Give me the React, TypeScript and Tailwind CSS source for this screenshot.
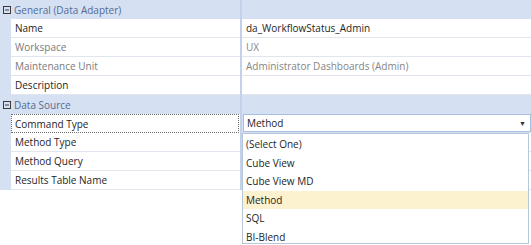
import { useState } from "react";

type Row = {
  label: string;
  value?: string;
  muted?: boolean;
};

const general: Row[] = [
  { label: "Name", value: "da_WorkflowStatus_Admin" },
  { label: "Workspace", value: "UX", muted: true },
  { label: "Maintenance Unit", value: "Administrator Dashboards (Admin)", muted: true },
  { label: "Description", value: "" },
];

const dataSource: Row[] = [
  { label: "Method Type" },
  { label: "Method Query" },
  { label: "Results Table Name" },
];

const options = ["(Select One)", "Cube View", "Cube View MD", "Method", "SQL", "BI-Blend"];

function MinusBox() {
  return (
    <svg width="8" height="8" viewBox="0 0 8 8" className="shrink-0">
      <rect x="0.5" y="0.5" width="7" height="7" fill="none" stroke="#3a3a3a" strokeWidth="1" />
      <line x1="2" y1="4" x2="6" y2="4" stroke="#3a3a3a" strokeWidth="1" />
    </svg>
  );
}

function CategoryRow({ title }: { title: string }) {
  return (
    <div className="flex h-[19px] bg-[#d5e0f3]">
      <div className="flex w-[240px] items-center gap-[3px] pl-[3px]">
        <MinusBox />
        <span className="text-[#566b92]">{title}</span>
      </div>
      <div className="w-[2px] bg-[#c3d1ea]" />
      <div className="flex-1" />
    </div>
  );
}

function PropRow({ row }: { row: Row }) {
  return (
    <div className="flex h-[19px]">
      <div className="w-[11px] bg-[#d5e0f3]" />
      <div
        className={`flex w-[229px] items-center border-b border-[#e1e6ee] bg-white pl-[4px] ${
          row.muted ? "text-[#7a7a7a]" : "text-[#1e1e1e]"
        }`}
      >
        {row.label}
      </div>
      <div className="w-[2px] bg-[#c3d1ea]" />
      <div
        className={`flex flex-1 items-center border-b border-[#e1e6ee] bg-white pl-[4px] ${
          row.muted ? "text-[#858585]" : "text-[#1e1e1e]"
        }`}
      >
        {row.value}
      </div>
    </div>
  );
}

export default function App() {
  const [selected, setSelected] = useState("Method");

  return (
    <div
      className="relative h-[245px] w-[531px] overflow-hidden bg-white text-[10px] leading-none"
      style={{ fontFamily: '"Open Sans", "Noto Sans", sans-serif' }}
    >
      <CategoryRow title="General (Data Adapter)" />
      {general.map((r) => (
        <PropRow key={r.label} row={r} />
      ))}
      <CategoryRow title="Data Source" />

      {/* Command Type row with the open select */}
      <div className="flex h-[19px]">
        <div className="w-[11px] bg-[#d5e0f3]" />
        <div className="flex w-[228px] items-center border border-dotted border-[#707070] bg-white pl-[3px] text-[#1e1e1e]">
          Command Type
        </div>
        <div className="w-[1px] bg-white" />
        <div className="w-[2px] bg-[#c3d1ea]" />
        <div className="flex flex-1 bg-[#d5e0f3] pl-[1px] pb-[1px]">
          <div className="flex flex-1 items-center justify-between border border-[#aabedf] bg-white pl-[3px] pr-[4px] text-[#1e1e1e]">
            <span>{selected}</span>
            <span className="text-[7px] text-[#333]">▼</span>
          </div>
        </div>
      </div>

      {dataSource.map((r) => (
        <PropRow key={r.label} row={r} />
      ))}

      {/* Dropdown list */}
      <div className="absolute left-[242px] top-[133px] h-[111px] w-[287px] border border-[#b8c6dc] bg-white py-[1px]">
        {options.map((o) => (
          <div
            key={o}
            onClick={() => setSelected(o)}
            className={`flex h-[18.5px] items-center pl-[3px] text-[#1e1e1e] ${
              o === selected ? "bg-[#fdf2cf]" : ""
            }`}
          >
            {o}
          </div>
        ))}
      </div>
    </div>
  );
}
